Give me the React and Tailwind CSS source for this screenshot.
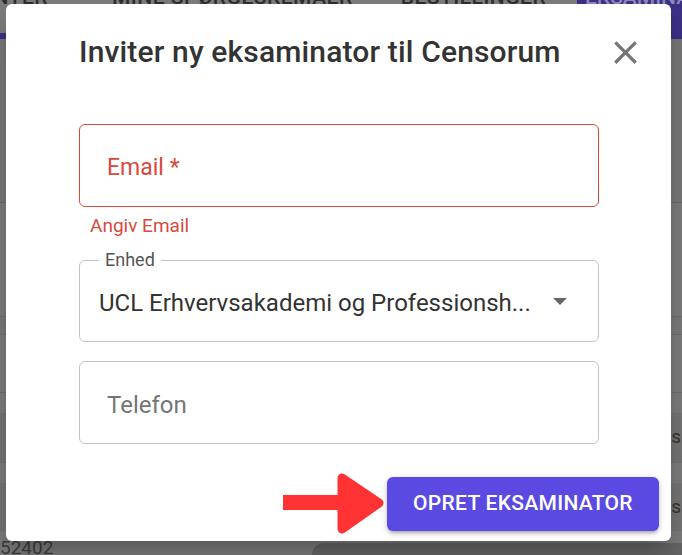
import React from 'react';

const BackgroundPage = () => {
  return (
    <div className="flex h-full flex-col text-[#2e2e2e]">
      <div className="flex h-[33px] overflow-hidden">
        <div className="flex flex-1 items-start overflow-hidden text-[21px] font-medium leading-[20px] tracking-[0.5px]">
          <span className="-ml-[24px] -mt-[13px] w-[72px] text-right">ENTER</span>
          <span className="-mt-[13px] ml-[64px]">MINE SPØRGESKEMAER</span>
          <span className="-mt-[13px] ml-[48px]">BESTILLINGER</span>
        </div>
        <div className="w-[105px] bg-[#3b3085] pl-[8px] text-[21px] font-medium leading-[20px] text-[#8f88c0]">
          <span className="-mt-[13px] block">EKSAMINATORER</span>
        </div>
      </div>
      <div className="h-[6px] bg-[#3b3085]" />
      <div className="h-[164px] border-b border-[#6a6a6a] bg-[#777777]" />
      <div className="h-[114px] border-b border-[#6f6f6f] bg-[#7c7c7c]" />
      <div className="h-[18px] border-b border-[#6f6f6f] bg-[#7a7a7a]" />
      <div className="h-[58px] border-b border-[#6f6f6f] bg-[#7c7c7c]" />
      <div className="flex h-[20px] bg-[#7c7c7c]" />
      <div className="flex h-[50px] items-center justify-end border-b border-[#6f6f6f] bg-[#747474] pr-[1px] text-[19px] text-[#333]">
        s
      </div>
      <div className="flex h-[20px] bg-[#7c7c7c]" />
      <div className="flex h-[48px] items-center justify-end bg-[#747474] pr-[1px] text-[19px] text-[#333]">
        s
      </div>
      <div className="flex flex-1 items-end bg-[#7c7c7c]">
        <span className="-mb-[4px] text-[19px] leading-[22px] text-[#3e3e3e]">52402</span>
        <div className="ml-auto h-[12px] w-[370px] rounded-tl-[14px] bg-[#656565]" />
      </div>
    </div>
  );
};

const CloseIcon = () => (
  <svg width="39" height="39" viewBox="0 0 24 24" fill="#757575">
    <path d="M19 6.41 17.59 5 12 10.59 6.41 5 5 6.41 10.59 12 5 17.59 6.41 19 12 13.41 17.59 19 19 17.59 13.41 12z" />
  </svg>
);

const RedArrow = () => (
  <svg width="102" height="61" viewBox="0 0 102 61">
    <rect x="0" y="22" width="60" height="15" fill="#ff3333" />
    <polygon
      points="59,5 96,30 59,56"
      fill="#ff3333"
      stroke="#ff3333"
      strokeWidth="9"
      strokeLinejoin="round"
    />
  </svg>
);

const Dialog = () => {
  return (
    <div className="absolute left-[6px] top-[4px] flex h-[537px] w-[665px] flex-col rounded-[6px] bg-white shadow-[0_11px_15px_-7px_rgba(0,0,0,0.2),0_24px_38px_3px_rgba(0,0,0,0.14)]">
      <div className="mt-[28px] flex h-[40px] items-center justify-between pl-[73px] pr-[26px]">
        <h2 className="text-[30px] font-medium leading-[40px] tracking-[0.15px] text-[#333333]">
          Inviter ny eksaminator til Censorum
        </h2>
        <button className="flex h-[40px] w-[40px] items-center justify-center">
          <CloseIcon />
        </button>
      </div>

      <div className="ml-[73px] mt-[52px] w-[520px]">
        <div className="flex h-[83px] items-center rounded-[6px] border border-[#d8493e] pl-[27px]">
          <span className="mt-[6px] text-[23px] text-[#d8493e]">Email *</span>
        </div>
        <p className="mt-[9px] pl-[11px] text-[19px] leading-[20px] text-[#d8493e]">Angiv Email</p>

        <div className="relative mt-[24px] flex h-[82px] items-center rounded-[6px] border border-[#c4c4c4] pl-[19px] pr-[31px]">
          <span className="absolute -top-[12px] left-[19px] bg-white px-[6px] text-[18px] leading-[22px] text-[#555555]">
            Enhed
          </span>
          <span className="mt-[3px] flex-1 truncate text-[24px] text-[#333333]">
            UCL Erhvervsakademi og Professionsh...
          </span>
          <svg width="14" height="7" viewBox="0 0 14 7" className="ml-[16px] shrink-0">
            <polygon points="0,0 14,0 7,7" fill="#666666" />
          </svg>
        </div>

        <div className="mt-[19px] flex h-[83px] items-center rounded-[6px] border border-[#c4c4c4] pl-[27px]">
          <span className="mt-[5px] text-[24px] text-[#757575]">Telefon</span>
        </div>
      </div>

      <div className="mt-[29px] flex items-center justify-end gap-[2px] pr-[12px]">
        <RedArrow />
        <button className="h-[54px] w-[272px] rounded-[6px] bg-[#5a4ae2] text-[21px] font-medium tracking-[0.3px] text-white shadow-[0_3px_3px_-2px_rgba(0,0,0,0.2),0_3px_4px_0_rgba(0,0,0,0.14),0_1px_8px_0_rgba(0,0,0,0.12)]">
          OPRET EKSAMINATOR
        </button>
      </div>
    </div>
  );
};

export default function App() {
  return (
    <div className="relative h-[555px] w-[682px] overflow-hidden bg-[#7c7c7c] font-['Roboto',sans-serif]">
      <BackgroundPage />
      <Dialog />
    </div>
  );
}
